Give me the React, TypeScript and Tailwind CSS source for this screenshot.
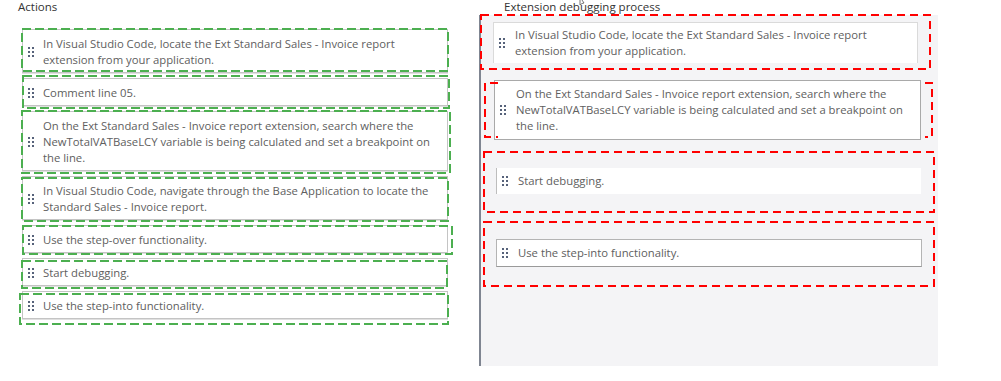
import React from 'react';

const actions = [
  'In Visual Studio Code, locate the Ext Standard Sales - Invoice report extension from your application.',
  'Comment line 05.',
  'On the Ext Standard Sales - Invoice report extension, search where the NewTotalVATBaseLCY variable is being calculated and set a breakpoint on the line.',
  'In Visual Studio Code, navigate through the Base Application to locate the Standard Sales - Invoice report.',
  'Use the step-over functionality.',
  'Start debugging.',
  'Use the step-into functionality.',
];

// answer area: each card sits a little off, as it was dropped
const steps = [
  {
    text: 'In Visual Studio Code, locate the Ext Standard Sales - Invoice report extension from your application.',
    box: 'mt-[7px] ml-[12px] w-[425px] h-[41px] border border-[#dadada] border-b-0',
  },
  {
    text: 'On the Ext Standard Sales - Invoice report extension, search where the NewTotalVATBaseLCY variable is being calculated and set a breakpoint on the line.',
    box: 'mt-[17px] ml-[13px] w-[427px] h-[60px] border border-[#a9a9a9]',
  },
  {
    text: 'Start debugging.',
    box: 'mt-[28px] ml-[15px] w-[425px] h-[26px] border-l border-[#bdbdbd]',
  },
  {
    text: 'Use the step-into functionality.',
    box: 'mt-[45px] ml-[15px] w-[426px] h-[28px] border border-[#b4b4b4] border-b-[#9a9a9a]',
  },
];

function Grip() {
  return (
    <svg width="6" height="10" viewBox="0 0 6 10" className="shrink-0">
      {[0, 1, 2].map((r) =>
        [0, 1].map((c) => (
          <rect key={`${r}-${c}`} x={c * 4} y={r * 4} width="2" height="2" fill="#56627a" />
        ))
      )}
    </svg>
  );
}

const green = [
  [22, 29, 448, 71],
  [23, 76, 449, 108],
  [22, 111, 450, 173],
  [22, 178, 448, 221],
  [23, 226, 452, 254],
  [22, 261, 447, 288],
  [20, 294, 448, 324],
];

const red = [
  [481, 15, 930, 69],
  [484, 152, 934, 212],
  [484, 222, 934, 286],
];

export default function App() {
  return (
    <div className="relative flex h-[381px] w-[1001px] overflow-hidden bg-white font-['Open_Sans',sans-serif] text-[11.3px] leading-[16px] text-[#606060]">
      {/* Actions list */}
      <div className="w-[465px] shrink-0 pl-[18px]">
        <div className="leading-[14px] text-[11.5px] text-[#333]">Actions</div>
        <div className="mt-[15px] ml-[4px] flex w-[426px] flex-col gap-[5px]">
          {actions.map((a) => (
            <div
              key={a}
              className="flex items-center gap-[9px] border border-[#c4c4c4] bg-white pt-[6px] pb-[4px] pl-[5px] pr-[12px] shadow-[0_1px_0_rgba(0,0,0,0.12)]"
            >
              <Grip />
              <span>{a}</span>
            </div>
          ))}
        </div>
      </div>

      {/* Answer area */}
      <div className="ml-[14px] flex flex-col">
        <div className="pl-[25px] leading-[14px] text-[11.5px] text-[#333]">Extension debugging process</div>
        <div className="mt-px flex h-[351px] w-[459px] flex-col border-l-2 border-[#7f8591] bg-[#f4f4f6]">
          {steps.map((s) => (
            <div key={s.text} className={`flex items-center gap-[10px] bg-white pl-[5px] pr-[12px] ${s.box}`}>
              <Grip />
              <span>{s.text}</span>
            </div>
          ))}
        </div>
      </div>

      {/* annotation overlay */}
      <svg className="pointer-events-none absolute inset-0" width="1001" height="381">
        {green.map(([x1, y1, x2, y2], i) => (
          <rect
            key={i}
            x={x1}
            y={y1}
            width={x2 - x1}
            height={y2 - y1}
            fill="none"
            stroke="#4caf50"
            strokeWidth="2"
            strokeDasharray="9 4"
          />
        ))}
        {red.map(([x1, y1, x2, y2], i) => (
          <rect
            key={i}
            x={x1}
            y={y1}
            width={x2 - x1}
            height={y2 - y1}
            fill="none"
            stroke="#ff0000"
            strokeWidth="2"
            strokeDasharray="8 5"
          />
        ))}
        <path
          d="M498 83 H485 V137 H498 M925 83 H932 V137 H925"
          fill="none"
          stroke="#ff0000"
          strokeWidth="2"
          strokeDasharray="8 5"
        />
        {/* mouse pointer over the title */}
        <path d="M580 -3 L580 5 L582 3.5 L584 3 Z" fill="#fff" stroke="#555" strokeWidth="0.8" />
      </svg>
    </div>
  );
}
